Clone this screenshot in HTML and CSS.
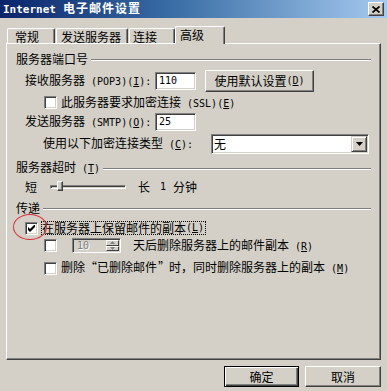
FILE: index.html
```html
<!DOCTYPE html>
<html lang="zh-CN">
<head>
<meta charset="utf-8">
<title>Internet 电子邮件设置</title>
<link rel="stylesheet" href="styles.css">
</head>
<body>
<div class="titlebar">
  <span class="title"><span class="tl">Internet</span><span class="tc">电子邮件设置</span></span>
  <span class="close"><svg width="8" height="7" viewBox="0 0 8 7"><path d="M0.5 0.5 L7.5 6.5 M7.5 0.5 L0.5 6.5" stroke="#000" stroke-width="1.7"/></svg></span>
</div>
<div class="tabs">
  <div class="tab t1">常规</div>
  <div class="tab t2">发送服务器</div>
  <div class="tab t3">连接</div>
  <div class="tab t4 sel">高级</div>
</div>
<div class="panel">
  <div class="group g1"><span class="glabel">服务器端口号</span><span class="etch"></span></div>
  <div class="row r-pop">
    <span class="lbl">接收服务器<span class="m"> (POP3)(<u>I</u>):</span></span>
    <span class="field"><span class="m">110</span></span>
    <span class="btn b-def">使用默认设置<span class="m">(<u>D</u>)</span></span>
  </div>
  <div class="row r-ssl">
    <span class="cb"></span><span class="cbl">此服务器要求加密连接<span class="m"> (SSL)(<u>E</u>)</span></span>
  </div>
  <div class="row r-smtp">
    <span class="lbl">发送服务器<span class="m"> (SMTP)(<u>O</u>):</span></span>
    <span class="field"><span class="m">25</span></span>
  </div>
  <div class="row r-enc">
    <span class="lbl lbl-enc">使用以下加密连接类型<span class="m"> (<u>C</u>):</span></span>
    <span class="select"><span class="sel-val">无</span><span class="drop"><svg width="7" height="4" viewBox="0 0 7 4"><polygon points="0,0 7,0 3.5,4" fill="#000"/></svg></span></span>
  </div>
  <div class="group g2"><span class="glabel">服务器超时<span class="m"> (<u>T</u>)</span></span><span class="etch"></span></div>
  <div class="row r-slider">
    <span>短</span>
    <span class="track"><span class="thumb"></span></span>
    <span class="long">长</span><span class="m one">1</span><span class="min">分钟</span>
  </div>
  <div class="group g3"><span class="glabel">传递</span><span class="etch"></span></div>
  <div class="row r-keep">
    <span class="cb"><svg width="7" height="7" viewBox="0 0 7 7"><polygon points="0,2 2,4 7,-1 7,2 2,7 0,5" fill="#000"/></svg></span>
    <span class="focus">在服务器上保留邮件的副本<span class="m"> (<u>L</u>)</span></span>
  </div>
  <div class="row r-days">
    <span class="cb"></span>
    <span class="spin"><span class="spin-val m">10</span><span class="arrows"><span class="arr"><svg width="5" height="3" viewBox="0 0 5 3"><polygon points="2.5,0 5,3 0,3" fill="#808080"/></svg></span><span class="arr"><svg width="5" height="3" viewBox="0 0 5 3"><polygon points="0,0 5,0 2.5,3" fill="#808080"/></svg></span></span></span>
    <span class="days">天后删除服务器上的邮件副本<span class="m"> (<u>R</u>)</span></span>
  </div>
  <div class="row r-del">
    <span class="cb"></span><span class="cbl">删除<span class="q ql">“</span>已删除邮件<span class="q qr">”</span>时，同时删除服务器上的副本<span class="m"> (<u>M</u>)</span></span>
  </div>
</div>
<div class="footer">
  <span class="btn ok">确定</span>
  <span class="btn cancel">取消</span>
</div>
<div class="mark"></div>
</body>
</html>
```
FILE: styles.css
```css
* { box-sizing: border-box; }
html, body { margin: 0; padding: 0; }
body {
  width: 387px; height: 391px; overflow: hidden; position: relative;
  background: #d4d0c8; color: #000;
  font-family: "Noto Sans CJK SC", "Noto Sans", sans-serif;
  font-size: 12px; line-height: 14px;
}
.m { font-family: "DejaVu Sans Mono", "Liberation Mono", monospace; font-size: 10px; }
.q { display: inline-block; width: 12px; }
.ql { text-align: right; padding-right: 1px; }
.qr { text-align: left; padding-left: 1px; }
u { text-decoration: underline; text-underline-offset: 1px; }

/* title bar */
.titlebar {
  height: 18px; display: flex; align-items: center; justify-content: space-between;
  padding: 0 3px 0 3px;
  background: linear-gradient(to right, #0a246a, #3a6ea5 45%, #a6caf0);
  color: #fff; font-weight: bold;
}
.tl { font-family: "DejaVu Sans Mono", monospace; font-size: 11px; }
.tc { letter-spacing: 1px; margin-left: 7px; }
.close {
  width: 16px; height: 14px; background: #d4d0c8;
  border: 1px solid; border-color: #fff #404040 #404040 #fff;
  box-shadow: inset -1px -1px #808080;
  display: flex; align-items: center; justify-content: center;
}

/* tabs */
.tabs {
  display: flex; align-items: flex-end; height: 17px; margin-top: 8px;
  padding-left: 7px; position: relative; z-index: 1;
}
.tab {
  height: 15px; padding-top: 1px; background: #d4d0c8; white-space: nowrap;
  border-top: 1px solid #fff; border-left: 1px solid #fff; border-right: 1px solid #404040;
  box-shadow: inset -1px 0 #808080; border-radius: 2px 2px 0 0;
}
.t1 { width: 48px; padding-left: 7px; }
.t2 { width: 72px; margin-left: 1px; padding-left: 4px; }
.t3 { width: 46px; margin-left: 1px; padding-left: 3px; }
.t4 { width: 50px; padding-left: 4px; }
.tab.sel { height: 18px; margin-bottom: -1px; }

/* panel */
.panel {
  margin-left: 6px; width: 375px; height: 317px;
  border: 1px solid; border-color: #fff #404040 #404040 #fff;
  box-shadow: inset -1px -1px #808080;
}
.group { display: flex; align-items: center; height: 14px; padding: 0 9px; }
.etch { flex: 1; height: 2px; margin: 2px 0 0 3px; border-top: 1px solid #808080; border-bottom: 1px solid #fff; }
.g1 { margin-top: 8px; }
.g2 { margin-top: 7px; }
.g3 { margin-top: 7px; }

.row { display: flex; align-items: center; white-space: nowrap; }
.lbl { width: 130px; }
.lbl-enc { width: 168px; }
.r-pop { height: 22px; margin-top: 4px; padding-left: 18px; }
.r-ssl { height: 13px; margin-top: 4px; padding-left: 37px; }
.r-smtp { height: 18px; margin-top: 4px; padding-left: 18px; }
.r-enc { height: 20px; margin-top: 3px; padding-left: 36px; }
.r-slider { height: 14px; margin-top: 5px; padding-left: 18px; }
.r-keep { height: 14px; margin-top: 6px; padding-left: 18px; }
.r-days { height: 15px; margin-top: 3px; padding-left: 37px; }
.r-del { height: 14px; margin-top: 8px; padding-left: 37px; }

.field, .cb, .select, .spin {
  border: 1px solid; border-color: #808080 #fff #fff #808080;
  box-shadow: inset 1px 1px #404040, inset -1px -1px #d4d0c8;
}
.field {
  width: 41px; height: 18px; background: #fff; padding: 0 0 0 3px;
  display: flex; align-items: center;
}
.cb {
  width: 13px; height: 13px; background: #fff; flex: none;
  display: flex; align-items: center; justify-content: center;
}
.cbl { margin-left: 4px; }

.btn {
  display: flex; align-items: center; justify-content: center; white-space: nowrap;
  background: #d4d0c8;
  border: 1px solid; border-color: #fff #404040 #404040 #fff;
  box-shadow: inset -1px -1px #808080;
}
.b-def { width: 109px; height: 22px; margin-left: 9px; }

.select {
  width: 158px; height: 20px; background: #fff; padding: 0 1px 0 2px;
  display: flex; align-items: center;
}
.sel-val { flex: 1; }
.drop {
  width: 16px; height: 16px; background: #d4d0c8;
  border: 1px solid; border-color: #d4d0c8 #404040 #404040 #d4d0c8;
  box-shadow: inset 1px 1px #fff, inset -1px -1px #808080;
  display: flex; align-items: center; justify-content: center;
}

.track {
  position: relative; margin-left: 13px; width: 76px; height: 4px;
  border: 1px solid; border-color: #808080 #fff #fff #808080;
  background: #d4d0c8; box-shadow: inset 1px 1px #404040;
}
.thumb {
  position: absolute; left: 6px; top: -5px; width: 6px; height: 10px;
  background: #d4d0c8;
  border: 1px solid; border-color: #fff #404040 #404040 #fff;
  box-shadow: inset -1px -1px #808080;
}
.long { margin-left: 12px; }
.one { margin-left: 10px; }
.min { margin-left: 7px; }

.r-keep .cb { margin-right: 3px; }
.focus { border: 1px dotted #000; padding: 0 1px 0 0; height: 14px; line-height: 12px; display: flex; align-items: center; }

.spin {
  margin-left: 15px; width: 49px; height: 15px; background: #d4d0c8;
  display: flex; padding: 1px 1px 1px 2px;
}
.spin-val { flex: 1; color: #808080; text-shadow: 1px 1px #fff; line-height: 11px; padding-left: 2px; }
.arrows { width: 13px; display: flex; flex-direction: column; }
.arr {
  flex: 1; background: #d4d0c8;
  border: 1px solid; border-color: #fff #404040 #404040 #fff;
  display: flex; align-items: center; justify-content: center;
}
.days { margin-left: 12px; }

.footer { display: flex; justify-content: flex-end; gap: 6px; padding-right: 6px; margin-top: 6px; }
.ok { width: 75px; height: 21px; border-color: #000; box-shadow: inset 1px 1px #fff, inset -1px -1px #404040, inset -2px -2px #808080; }
.cancel { width: 76px; height: 21px; }

.mark {
  position: absolute; left: 13px; top: 214px; width: 34px; height: 26px;
  border: 1px solid #d8303a; border-radius: 50%;
}
```
